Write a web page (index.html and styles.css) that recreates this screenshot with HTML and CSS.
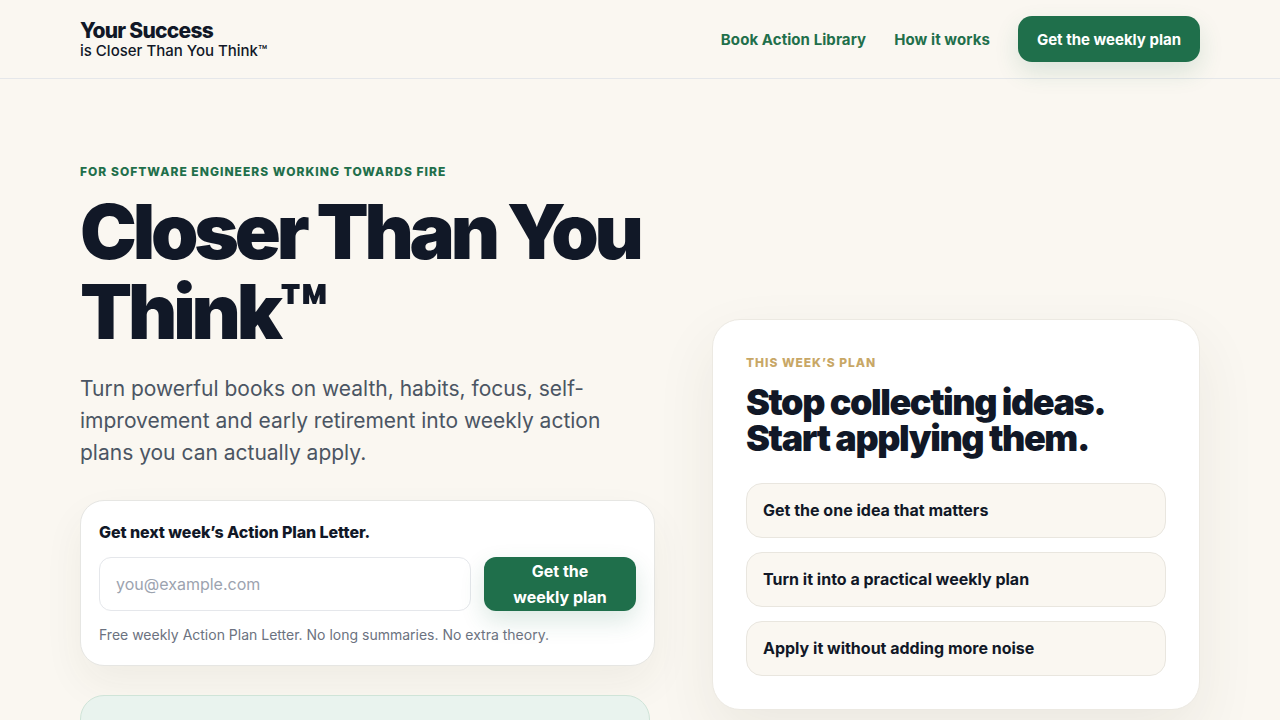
FILE: index.html
```html
<!DOCTYPE html>
<html lang="en">
<head>
<meta charset="utf-8">
<title>Your Success is Closer Than You Think™</title>
<link rel="stylesheet" href="styles.css">
</head>
<body>
<header class="site-header">
  <div class="container header-inner">
    <a class="brand" href="#">
      <span class="brand-title">Your Success</span>
      <span class="brand-sub">is Closer Than You Think™</span>
    </a>
    <nav class="nav">
      <a class="nav-link" href="#library">Book Action Library</a>
      <a class="nav-link" href="#how">How it works</a>
      <a class="btn btn-nav" href="#signup">Get the weekly plan</a>
    </nav>
  </div>
</header>

<main class="container hero">
  <div class="hero-copy">
    <p class="eyebrow">For software engineers working towards FIRE</p>
    <h1 class="hero-title">Closer Than You Think™</h1>
    <p class="hero-lead">Turn powerful books on wealth, habits, focus, self-improvement and early retirement into weekly action plans you can actually apply.</p>

    <form class="signup-card" id="signup">
      <p class="signup-title">Get next week’s Action Plan Letter.</p>
      <div class="signup-row">
        <input class="signup-input" type="email" placeholder="you@example.com">
        <button class="btn btn-signup" type="button">Get the weekly plan</button>
      </div>
      <p class="signup-note">Free weekly Action Plan Letter. No long summaries. No extra theory.</p>
    </form>

    <section class="library-box" id="library">
      <h3 class="library-title">Read how we Apply</h3>
      <p class="library-text">Browse the Book Action Library: one idea per book, turned into steps you can try this week.</p>
    </section>
  </div>

  <aside class="plan-card" id="how">
    <p class="plan-eyebrow">This week’s plan</p>
    <h2 class="plan-title">Stop collecting ideas. Start applying them.</h2>
    <ul class="plan-steps">
      <li class="plan-step">Get the one idea that matters</li>
      <li class="plan-step">Turn it into a practical weekly plan</li>
      <li class="plan-step">Apply it without adding more noise</li>
    </ul>
  </aside>
</main>
</body>
</html>
```

FILE: styles.css
```css
* {
  box-sizing: border-box;
}

html, body {
  margin: 0;
  padding: 0;
}

body {
  background: #faf7f1;
  color: #111827;
  font-family: Inter, "Noto Sans", "Liberation Sans", sans-serif;
  overflow: hidden;
  height: 720px;
}

a {
  text-decoration: none;
  color: inherit;
}

p, h1, h2, h3, ul {
  margin: 0;
  padding: 0;
}

.container {
  width: 1120px;
  margin: 0 auto;
}

/* Header */
.site-header {
  border-bottom: 1px solid #e5e7ea;
  background: #faf7f1;
}

.header-inner {
  display: flex;
  align-items: center;
  justify-content: space-between;
  padding: 16px 0;
}

.brand {
  display: flex;
  flex-direction: column;
  color: #111827;
}

.brand-title {
  font-size: 21px;
  font-weight: 800;
  letter-spacing: -0.035em;
  line-height: 22px;
  margin-top: 1px;
}

.brand-sub {
  font-size: 15px;
  font-weight: 500;
  line-height: 18px;
}

.nav {
  display: flex;
  align-items: center;
  gap: 28px;
}

.nav-link {
  font-size: 15px;
  font-weight: 700;
  color: #1f6f4b;
  letter-spacing: 0.005em;
}

.btn {
  background: #1f6f4b;
  color: #ffffff;
  font-family: inherit;
  font-weight: 700;
  border: none;
  cursor: pointer;
}

.btn-nav {
  display: inline-flex;
  align-items: center;
  height: 46px;
  padding: 0 19px;
  border-radius: 14px;
  font-size: 15px;
  box-shadow: 0 10px 24px rgba(31, 111, 75, 0.14);
}

/* Hero */
.hero {
  display: grid;
  grid-template-columns: 575px 488px;
  justify-content: space-between;
  align-items: center;
  padding-top: 85px;
}

.eyebrow {
  font-size: 12px;
  line-height: 16px;
  font-weight: 800;
  letter-spacing: 0.085em;
  text-transform: uppercase;
  color: #1f6f4b;
}

.hero-title {
  margin-top: 11px;
  font-size: 76px;
  line-height: 80px;
  font-weight: 900;
  letter-spacing: -0.055em;
  color: #111827;
}

.hero-lead {
  margin-top: 22px;
  font-size: 21px;
  line-height: 32px;
  color: #4b5563;
  font-weight: 400;
  max-width: 540px;
}

/* Signup card */
.signup-card {
  margin-top: 31px;
  background: #ffffff;
  border: 1px solid #e6e6e3;
  border-radius: 24px;
  padding: 19px 18px 20px;
  box-shadow: 0 18px 40px rgba(70, 60, 40, 0.06);
}

.signup-title {
  font-size: 16px;
  line-height: 24px;
  font-weight: 800;
  letter-spacing: -0.005em;
  color: #111827;
}

.signup-row {
  display: flex;
  gap: 13px;
  margin-top: 13px;
}

.signup-input {
  flex: 1 1 auto;
  min-width: 0;
  height: 54px;
  border: 1px solid #e5e7eb;
  border-radius: 12px;
  padding: 0 16px;
  font-family: inherit;
  font-size: 16px;
  color: #111827;
  background: #ffffff;
  outline: none;
}

.signup-input::placeholder {
  color: #9ca3af;
}

.btn-signup {
  flex: 0 0 152px;
  height: 54px;
  border-radius: 12px;
  padding: 0 24px;
  font-size: 16px;
  line-height: 26px;
  box-shadow: 0 10px 24px rgba(31, 111, 75, 0.16);
}

.signup-note {
  margin-top: 14px;
  font-size: 14px;
  line-height: 20px;
  color: #6b7280;
}

/* Library box */
.library-box {
  margin-top: 29px;
  width: 570px;
  background: #e9f3ee;
  border: 1px solid #cfe4d8;
  border-radius: 24px;
  padding: 20px 22px 64px;
}

.library-title {
  font-size: 18px;
  line-height: 26px;
  font-weight: 800;
  letter-spacing: -0.02em;
  color: #1f6f4b;
}

.library-text {
  margin-top: 10px;
  font-size: 15px;
  line-height: 24px;
  color: #4b5563;
}

/* Plan card */
.plan-card {
  background: #ffffff;
  border: 1px solid #ece9e2;
  border-radius: 28px;
  padding: 35px 33px 33px;
  box-shadow: 0 24px 60px rgba(70, 60, 40, 0.08);
}

.plan-eyebrow {
  font-size: 12px;
  line-height: 16px;
  font-weight: 800;
  letter-spacing: 0.08em;
  text-transform: uppercase;
  color: #c8a766;
}

.plan-title {
  margin-top: 13px;
  font-size: 36px;
  line-height: 36px;
  font-weight: 900;
  letter-spacing: -0.04em;
  color: #111827;
}

.plan-steps {
  list-style: none;
  margin-top: 27px;
  display: flex;
  flex-direction: column;
  gap: 14px;
}

.plan-step {
  background: #faf7f1;
  border: 1px solid #e9e6df;
  border-radius: 16px;
  padding: 15px 16px;
  font-size: 16px;
  line-height: 23px;
  font-weight: 700;
  color: #111827;
}
```
